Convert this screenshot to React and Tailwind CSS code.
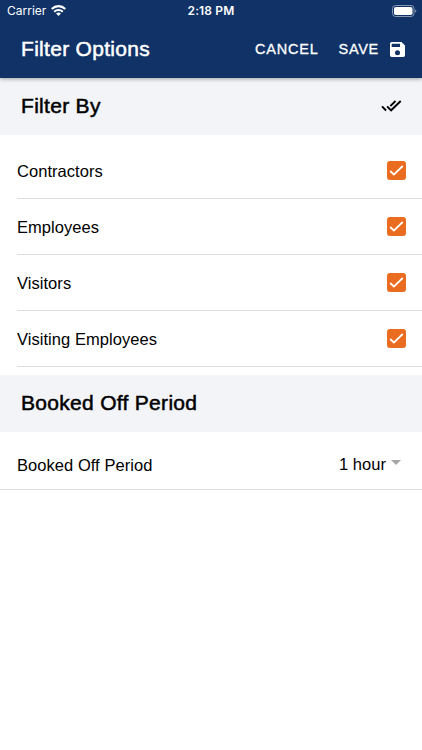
import React, { useState } from 'react';

const FILTERS = ['Contractors', 'Employees', 'Visitors', 'Visiting Employees'];

export default function App() {
  const [selected, setSelected] = useState(FILTERS);

  const toggle = (name) => {
    setSelected(prev =>
      prev.includes(name) ? prev.filter(item => item !== name) : [...prev, name]
    );
  };

  return (
    <div className="h-screen min-h-[750px] w-full overflow-hidden bg-white font-['Liberation_Sans',Arial,sans-serif] text-black">
      <header className="relative h-[78px] bg-[#103266] text-white shadow-[0_1px_4px_rgba(0,0,0,0.35)]">
        <StatusBar />
        <div className="flex h-[56px] items-center pr-[17px] pl-[21px]">
          <h1 className="flex-1 text-[21px] leading-6 tracking-[0.3px] [-webkit-text-stroke:0.5px_white]">Filter Options</h1>
          <button className="mr-[20px] text-[14.5px] leading-5 tracking-[0.8px] [-webkit-text-stroke:0.3px_white]">CANCEL</button>
          <button className="flex items-center text-[14.5px] leading-5 tracking-[0.7px] [-webkit-text-stroke:0.3px_white]">
            SAVE
            <SaveIcon />
          </button>
        </div>
      </header>

      <SectionHeader title="Filter By">
        <button onClick={() => setSelected(FILTERS)}>
          <DoneAllIcon />
        </button>
      </SectionHeader>

      <ul className="pt-2 pb-2">
        {FILTERS.map(name => (
          <li
            key={name}
            onClick={() => toggle(name)}
            className="ml-[17px] flex h-14 items-center justify-between border-b border-[#dcdcdc] pr-4"
          >
            <span className="text-[16.5px] leading-5 tracking-[0.05px]">{name}</span>
            <Checkbox checked={selected.includes(name)} />
          </li>
        ))}
      </ul>

      <SectionHeader title="Booked Off Period" />

      <div className="flex h-[58px] items-center justify-between border-b border-[#dcdcdc] pt-2 pr-[21px] pl-[17px]">
        <span className="text-[16.5px] leading-5 tracking-[0.05px]">Booked Off Period</span>
        <span className="flex items-center gap-[5px] pb-[2px] text-[16.5px] leading-5 tracking-[0.05px]">
          1 hour
          <svg width="10" height="5" viewBox="0 0 10 5" className="mb-[2px]">
            <path d="M0 0h10L5 5z" fill="#a6a6a6" />
          </svg>
        </span>
      </div>
    </div>
  );
}

function StatusBar() {
  return (
    <div className="grid h-[21px] grid-cols-3 items-center pr-[5px] pl-[7px] font-[Inter,sans-serif] text-[12px] leading-4">
      <div className="flex items-center gap-[5px]">
        <span>Carrier</span>
        <svg width="15" height="11" viewBox="0 0 15 11" fill="none" stroke="white">
          <path d="M0.7 4a9.6 9.6 0 0 1 13.6 0" strokeWidth="2.2" />
          <path d="M3.2 6.7a6.2 6.2 0 0 1 8.6 0" strokeWidth="2" />
          <path d="M7.5 11 5.1 8.6a3.5 3.5 0 0 1 4.8 0z" fill="white" stroke="none" />
        </svg>
      </div>
      <span className="pr-[2px] text-center font-semibold tracking-[0.15px]">2:18 PM</span>
      <svg width="25" height="12" viewBox="0 0 25 12" className="justify-self-end">
        <rect x="0.5" y="0.5" width="21.5" height="11" rx="3" fill="none" stroke="#8799b5" />
        <rect x="2" y="2" width="18.5" height="8" rx="1.8" fill="white" />
        <path d="M23.2 4.2c1.5.6 1.5 3 0 3.6z" fill="#8799b5" />
      </svg>
    </div>
  );
}

function SectionHeader({ title, children }) {
  return (
    <div className="flex h-[57px] items-center justify-between bg-[#f3f4f8] pr-[20px] pb-[2px] pl-[21px]">
      <h2 className="text-[21px] leading-6 tracking-[0.3px] [-webkit-text-stroke:0.5px_black]">{title}</h2>
      {children}
    </div>
  );
}

function Checkbox({ checked }) {
  return (
    <svg width="19" height="19" viewBox="0 0 19 19">
      <rect
        x="0.5"
        y="0.5"
        width="18"
        height="18"
        rx="2"
        fill={checked ? '#e96c20' : 'white'}
        stroke={checked ? '#e96c20' : '#999999'}
      />
      {checked && <path d="M3.2 10 6.9 13.6 15.7 5" fill="none" stroke="white" strokeWidth="1.8" />}
    </svg>
  );
}

function DoneAllIcon() {
  return (
    <svg width="21" height="12" viewBox="0 0 21 12" fill="none" stroke="currentColor" strokeWidth="1.9">
      <path d="M1 6.3 5.1 10.5M6.1 6.3 10.1 10.3 19.7 1M9.3 6.2 14.5 1" />
    </svg>
  );
}

function SaveIcon() {
  return (
    <svg width="15" height="15" viewBox="0 0 15 15" className="ml-[11px]">
      <path
        fill="white"
        fillRule="evenodd"
        d="M1.7 0h9.8L15 3.5v9.8a1.7 1.7 0 0 1-1.7 1.7H1.7A1.7 1.7 0 0 1 0 13.3V1.7A1.7 1.7 0 0 1 1.7 0zM1.7 1.7v3.3h8.3V1.7zM7.5 8.3a2.5 2.5 0 1 0 0 5 2.5 2.5 0 0 0 0-5z"
      />
    </svg>
  );
}
